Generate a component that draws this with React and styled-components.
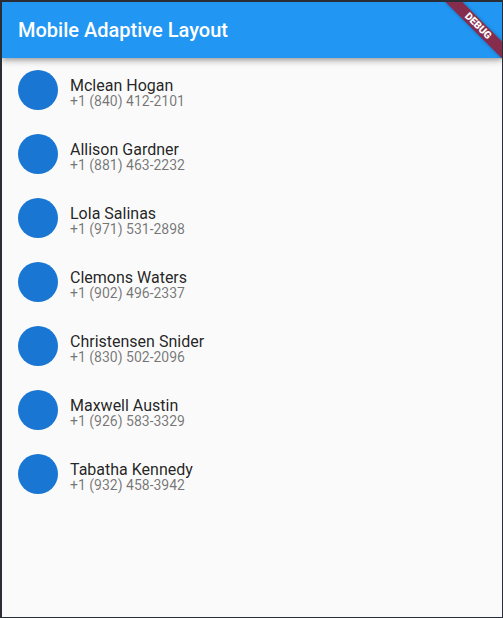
import React from "react";
import styled, { createGlobalStyle } from "styled-components";

const GlobalStyle = createGlobalStyle`
  html, body {
    margin: 0;
    padding: 0;
    background: #2a2d36;
  }
  body {
    font-family: Roboto, "Noto Sans", "Liberation Sans", sans-serif;
  }
`;

const Frame = styled.div`
  padding: 2px 1px 1px 2px;
  height: 618px;
  box-sizing: border-box;
`;

const Window = styled.div`
  position: relative;
  height: 100%;
  background: #fafafa;
  overflow: hidden;
  display: flex;
  flex-direction: column;
`;

const AppBar = styled.header`
  height: 56px;
  flex-shrink: 0;
  background: #2196f3;
  display: flex;
  align-items: center;
  padding: 0 16px;
  box-shadow: 0 2px 4px -1px rgba(0, 0, 0, 0.2), 0 4px 5px 0 rgba(0, 0, 0, 0.14),
    0 1px 10px 0 rgba(0, 0, 0, 0.12);
  position: relative;
  z-index: 1;
`;

const Title = styled.h1`
  margin: 0;
  color: #fff;
  font-size: 20px;
  font-weight: 500;
  line-height: 24px;
`;

const List = styled.ul`
  list-style: none;
  margin: 0;
  padding: 0;
`;

const Item = styled.li`
  height: 64px;
  display: flex;
  align-items: center;
  gap: 12px;
  padding: 0 16px;
`;

const Avatar = styled.div`
  width: 40px;
  height: 40px;
  border-radius: 50%;
  background: #1976d2;
  flex-shrink: 0;
`;

const Texts = styled.div`
  align-self: flex-start;
  padding-top: 19px;
  display: flex;
  flex-direction: column;
`;

const Name = styled.span`
  font-size: 16px;
  line-height: 17px;
  color: rgba(0, 0, 0, 0.87);
`;

const Phone = styled.span`
  font-size: 14px;
  line-height: 15px;
  color: rgba(0, 0, 0, 0.54);
`;

const BannerCorner = styled.div`
  position: absolute;
  top: 0;
  right: 0;
  width: 0;
  height: 0;
  transform: rotate(45deg);
  transform-origin: 0 0;
  z-index: 2;
`;

const Ribbon = styled.div`
  position: absolute;
  left: -40px;
  top: 28px;
  width: 80px;
  height: 12px;
  background: #862d4e;
  box-shadow: 0 0 4px rgba(0, 0, 0, 0.25);
  color: #fff;
  font-size: 10.2px;
  font-weight: 900;
  line-height: 12px;
  text-align: center;
`;

const contacts = [
  { name: "Mclean Hogan", phone: "+1 (840) 412-2101" },
  { name: "Allison Gardner", phone: "+1 (881) 463-2232" },
  { name: "Lola Salinas", phone: "+1 (971) 531-2898" },
  { name: "Clemons Waters", phone: "+1 (902) 496-2337" },
  { name: "Christensen Snider", phone: "+1 (830) 502-2096" },
  { name: "Maxwell Austin", phone: "+1 (926) 583-3329" },
  { name: "Tabatha Kennedy", phone: "+1 (932) 458-3942" },
];

const App = () => {
  return (
    <Frame>
      <GlobalStyle />
      <Window>
        <AppBar>
          <Title>Mobile Adaptive Layout</Title>
        </AppBar>
        <List>
          {contacts.map((c) => (
            <Item key={c.name}>
              <Avatar />
              <Texts>
                <Name>{c.name}</Name>
                <Phone>{c.phone}</Phone>
              </Texts>
            </Item>
          ))}
        </List>
        <BannerCorner>
          <Ribbon>DEBUG</Ribbon>
        </BannerCorner>
      </Window>
    </Frame>
  );
};

export default App;
